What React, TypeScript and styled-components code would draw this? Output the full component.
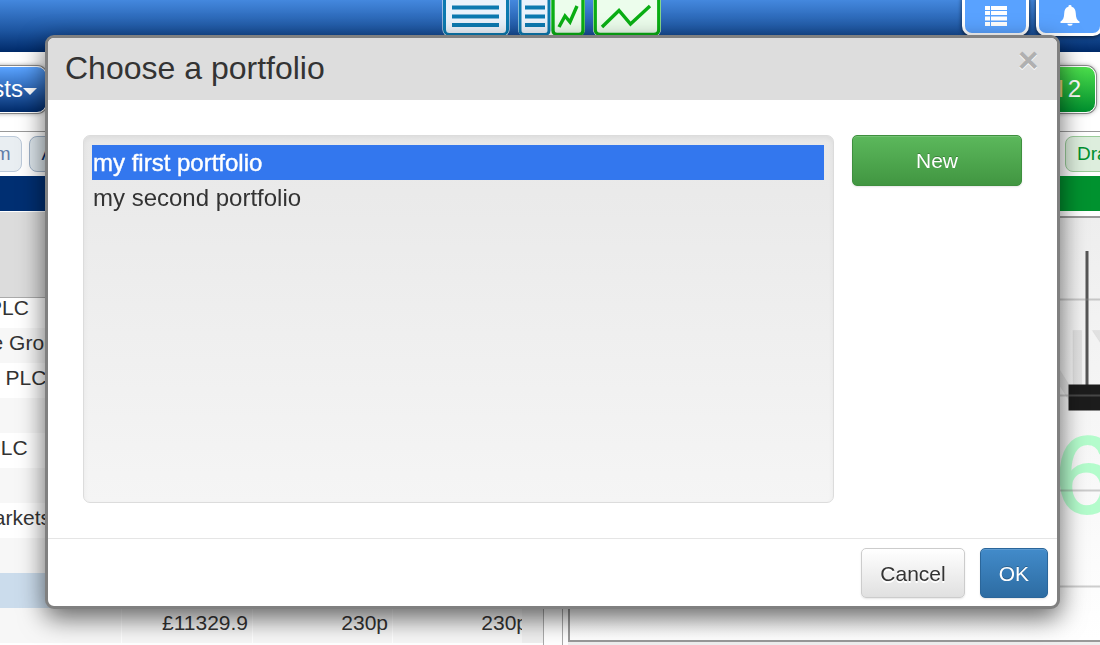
import React from "react";
import styled, { createGlobalStyle, css } from "styled-components";

const GlobalStyle = createGlobalStyle`
  *, *::before, *::after { box-sizing: border-box; }
  html, body { margin: 0; overflow: hidden; }
  body {
    background: #fff;
    color: #333;
    font: 21px/35px "Liberation Sans", Arial, sans-serif;
  }
  button, select { font-family: inherit; margin: 0; }
`;

/* ---------- workspace behind the dialog ---------- */

const Shell = styled.div`
  width: calc(100% + 3px);
  height: 100vh;
  display: flex;
  flex-direction: column;
  overflow: hidden;
`;

const TopBar = styled.header`
  flex: none;
  height: 52px;
  display: grid;
  grid-template-columns: 1fr auto 1fr;
  align-items: start;
  background: linear-gradient(#4488de, #1c549f 60%, #002a69);
`;

const LayoutSwitch = styled.div`
  grid-column: 2;
  display: flex;
  gap: 8px;
`;

const TopActions = styled.div`
  display: flex;
  justify-content: flex-end;
  gap: 7px;
`;

const LayoutButton = styled.button`
  display: block;
  padding: 0;
  border: 0;
  background: none;
  line-height: 0;
`;

const TopButton = styled.button`
  width: 67px;
  height: 46px;
  margin-top: -10px;
  padding: 5px 0 0;
  display: flex;
  align-items: center;
  justify-content: center;
  color: #fff;
  background: #59a2ff;
  border: 3px solid #fff;
  border-radius: 10px;
  box-shadow: 0 1px 4px rgba(0, 0, 0, 0.7);
`;

const Toolbar = styled.nav`
  flex: none;
  height: 80px;
  display: flex;
  justify-content: space-between;
  align-items: flex-start;
  padding: 14px 7px 0 0;
  border-bottom: 1px solid #999;
`;

const MenuButton = styled.button<{ $tone: "blue" | "green" }>`
  height: 47px;
  width: 168px;
  display: flex;
  align-items: center;
  justify-content: flex-end;
  color: #fff;
  font-size: 24px;
  border: 1px solid #fff;
  border-radius: 10px;
  box-shadow: 0 0 0 1px #888, 0 0 5px rgba(0, 0, 0, 0.5);
  ${(p) =>
    p.$tone === "blue"
      ? css`
          margin-left: -121px;
          padding: 0 9px 2px 0;
          background: linear-gradient(#5aa3ff, #002a69);
        `
      : css`
          gap: 4px;
          padding: 0 14px 2px 0;
          background: linear-gradient(#4cde4c, #008f2e);
        `}
`;

const Caret = styled.span`
  border: 7px solid transparent;
  border-top-color: #fff;
  border-bottom: 0;
  margin-top: 6px;
`;

const LevelWord = styled.span`
  color: #f3d58a;
`;

const Panels = styled.main`
  flex: 1;
  min-height: 0;
  display: flex;
  gap: 18px;
`;

const ListPanel = styled.section`
  width: 544px;
  border-right: 1px solid #aaa;
  overflow: hidden;
`;

const ChartPanel = styled.section`
  flex: 1;
  border-left: 1px solid #aaa;
  overflow: hidden;
  display: flex;
  flex-direction: column;
`;

const Tabs = styled.div<{ $end?: boolean }>`
  flex: none;
  height: 44px;
  display: flex;
  gap: 7px;
  padding-top: 4px;
  justify-content: ${(p) => (p.$end ? "flex-end" : "flex-start")};
  margin: ${(p) => (p.$end ? "0 -36px 0 0" : "0 0 0 -67px")};
`;

const Tab = styled.button<{ $tone: "blue" | "green" | "slate" }>`
  height: 36px;
  min-width: 74px;
  padding: 0 11px;
  font-size: 19px;
  border-radius: 8px;
  border: 1px solid;
  text-align: left;
  ${(p) =>
    p.$tone === "green"
      ? css`
          color: #008f2e;
          background: #ddeedd;
          border-color: #99cc99;
        `
      : p.$tone === "blue"
      ? css`
          color: #5f7da8;
          background: #e9eef2;
          border-color: #bccada;
        `
      : css`
          color: #002a69;
          background: #dde6ec;
          border-color: #9fb2c8;
        `}
`;

const TitleStrip = styled.div<{ $color: string }>`
  flex: none;
  height: 35px;
  background: ${(p) => p.$color};
`;

const TableScroll = styled.div`
  width: 522px;
  overflow: hidden;
`;

const ListBody = styled.div`
  background: #efefef;
`;

const ListHead = styled.div`
  height: 87px;
  border-top: 1px solid #fff;
  border-bottom: 1px solid #aaa;
  background: #dcdcdc;
`;

const Holdings = styled.table`
  width: 629px;
  margin: -5px 0 0 -96px;
  table-layout: fixed;
  border-collapse: collapse;
`;

const HoldingRow = styled.tr<{ $selected?: boolean }>`
  height: 35px;
  background: #fff;
  &:nth-child(even) {
    background: #f7f7f7;
  }
  ${(p) => p.$selected && "&&& { background: #cbdcec; }"}
`;

const Cell = styled.td`
  height: 35px;
  padding: 0 4px 5px 0;
  line-height: 30px;
  text-align: right;
  border-right: 1px solid #fff;
`;

const NameCell = styled.th`
  padding: 0 0 5px;
  line-height: 30px;
  font-weight: normal;
  text-align: left;
  white-space: nowrap;
  border-right: 1px solid #fff;
`;

const ChartFrame = styled.div`
  flex: 1;
  margin: 5px 0 0 5px;
  background: #eee;
`;

const ChartSvg = styled.svg`
  display: block;
  width: 100%;
  height: 426px;
  border: 2px solid #999;
  border-right: 0;
`;

/* ---------- dialog ---------- */

const Overlay = styled.div`
  position: fixed;
  inset: 0;
  padding: 35px 40px 36px 45px;
`;

const Dialog = styled.div`
  background: #fff;
  border: 3px solid #808080;
  border-radius: 9px;
  box-shadow: 0 9px 26px rgba(0, 0, 0, 0.6);
`;

const DialogHeader = styled.div`
  display: flex;
  justify-content: space-between;
  align-items: flex-start;
  padding: 10px 19px 12px 17px;
  background: #ddd;
  border-radius: 6px 6px 0 0;
`;

const DialogTitle = styled.h3`
  margin: 0;
  font-size: 32px;
  line-height: 40px;
  font-weight: normal;
`;

const CloseButton = styled.button`
  width: 20px;
  padding: 0;
  border: 0;
  background: none;
  color: #b0b0b0;
  font-size: 35px;
  font-weight: bold;
  line-height: 24px;
  text-shadow: 0 1px 0 #fff;
`;

const DialogBody = styled.div`
  display: flex;
  align-items: flex-start;
  gap: 18px;
  padding: 35px;
`;

const Well = styled.div`
  flex: 1;
  min-height: 368px;
  padding: 9px 9px 9px 8px;
  border: 1px solid #dcdcdc;
  border-radius: 7px;
  background: linear-gradient(#e8e8e8, #f5f5f5);
  box-shadow: inset 0 2px 5px rgba(0, 0, 0, 0.05), 0 1px 0 rgba(255, 255, 255, 0.1);
`;

const PortfolioList = styled.select`
  display: block;
  width: 100%;
  height: 348px;
  padding: 0;
  border: 0;
  border-radius: 0;
  outline: 0;
  overflow: hidden;
  background: transparent;
  font-size: 24px;

  option {
    height: 35px;
    min-height: 35px;
    padding: 4px 1px 0;
    color: #333;
  }
  option:checked {
    background-image: linear-gradient(#3377ee, #3377ee);
    -webkit-text-fill-color: #fff;
    -webkit-text-stroke: 0.4px #fff;
  }
`;

const DialogFooter = styled.div`
  display: flex;
  justify-content: flex-end;
  gap: 15px;
  padding: 9px 9px 8px;
  border-top: 1px solid #e5e5e5;
`;

const tones = {
  green: css`
    color: #fff;
    background: linear-gradient(#5cb85c, #419641);
    border-color: #3e8f3e;
    text-shadow: 0 -1px 0 rgba(0, 0, 0, 0.25);
  `,
  blue: css`
    color: #fff;
    background: linear-gradient(#428bca, #2d6ca2);
    border-color: #2b669a;
    text-shadow: 0 -1px 0 rgba(0, 0, 0, 0.25);
  `,
  plain: css`
    color: #333;
    background: linear-gradient(#fff, #e0e0e0);
    border-color: #ccc;
    text-shadow: 0 2px 0 #fff;
  `,
};

const Button = styled.button<{ $tone: keyof typeof tones; $width?: number }>`
  height: ${(p) => (p.$width ? 51 : 50)}px;
  ${(p) => p.$width && `width: ${p.$width}px;`}
  padding: 1px 18px 0;
  font-size: 21px;
  border: 1px solid;
  border-radius: 5px;
  ${(p) => tones[p.$tone]}
  box-shadow: inset 0 1px 0 rgba(255, 255, 255, 0.15), 0 1px 2px rgba(0, 0, 0, 0.1);
`;

/* ---------- drawings ---------- */

const BLUE = "#0c79b0";
const GREEN = "#0aae14";

const RowsIcon = () => (
  <svg width="68" height="37" viewBox="0 0 68 37">
    <rect x="0.5" y="-9.5" width="67" height="46" rx="7" fill="#fff" />
    <rect x="2.5" y="-8.5" width="63" height="43" rx="5" fill="#eaf2fb" stroke={BLUE} strokeWidth="3" />
    <path d="M10 7.5h47M10 16.5h47M10 25h47" stroke={BLUE} strokeWidth="3.8" />
  </svg>
);

const SplitIcon = () => (
  <svg width="67" height="37" viewBox="0 0 67 37">
    <rect x="0" y="-9.5" width="67" height="46" rx="7" fill="#fff" />
    <rect x="2" y="-8.5" width="29" height="43" rx="4" fill="#eaf2fb" stroke={BLUE} strokeWidth="3" />
    <path d="M7 7.5h20M7 16.5h20M7 25h20" stroke={BLUE} strokeWidth="3.8" />
    <rect x="35" y="-8.5" width="30" height="43" rx="4" fill="#ecfdec" stroke={GREEN} strokeWidth="3.4" />
    <path d="M41 27L47 16L52 22L59 6" fill="none" stroke={GREEN} strokeWidth="3.4" />
  </svg>
);

const TrendIcon = () => (
  <svg width="68" height="37" viewBox="0 0 68 37">
    <rect x="0" y="-9.5" width="68" height="46" rx="7" fill="#fff" />
    <rect x="2.2" y="-8.5" width="63.6" height="43" rx="5" fill="#ecfdec" stroke={GREEN} strokeWidth="3.4" />
    <path d="M9 27L26 10.5L37.5 24L57 6" fill="none" stroke={GREEN} strokeWidth="3.4" />
  </svg>
);

const ListIcon = () => (
  <svg width="22" height="20" viewBox="0 0 22 20" fill="currentColor">
    <path d="M0 0h5v4H0zM6 0h16v4H6zM0 5h5v4H0zM6 5h16v4H6zM0 10.5h5v4H0zM6 10.5h16v4H6zM0 16h5v4H0zM6 16h16v4H6z" />
  </svg>
);

const BellIcon = () => (
  <svg width="20" height="21" viewBox="0 0 20 21" fill="currentColor">
    <path d="M10 0a1.5 1.5 0 0 1 1.5 1.8C14.500 2.500 15.600 5 15.800 8.500C16 13 17 15 19.500 16.500V18H.5V16.500C3 15 4 13 4.200 8.500C4.400 5 5.500 2.500 8.500 1.800A1.500 1.500 0 0 1 10 0zM7.300 18.800h5.400a2.700 2 0 0 1-5.400 0z" />
  </svg>
);

const Chart = () => (
  <ChartSvg viewBox="0 0 534 422" preserveAspectRatio="xMaxYMin slice" aria-hidden="true">
    <defs>
      <linearGradient id="plot" x1="0" y1="0" x2="0" y2="1">
        <stop offset="0" stopColor="#eeeeee" />
        <stop offset="1" stopColor="#ffffff" />
      </linearGradient>
    </defs>
    <rect width="534" height="422" fill="url(#plot)" />
    <text x="446" y="184" fontSize="104" fill="#000" fillOpacity="0.07" stroke="#000" strokeOpacity="0.03">NY</text>
    <text x="486" y="295" fontSize="110" fill="#b4fccc" stroke="#b4fccc" strokeWidth="2">6</text>
    <path d="M518 33V168" stroke="#555" strokeWidth="3" />
    <rect x="499.500" y="166.500" width="60" height="26" fill="#1c1c1c" />
    <path d="M0 81.500H534M0 177.500H534M0 272.500H534M0 368.500H534" stroke="#888" strokeOpacity="0.4" strokeWidth="2" />
  </ChartSvg>
);

const holdings = [
  { name: "Centrica PLC" },
  { name: "Greencore Group" },
  { name: "Schroders PLC" },
  { name: "" },
  { name: "Unilever PLC" },
  { name: "" },
  { name: "Energy Markets" },
  { name: "" },
  { name: "", selected: true },
  { name: "", value: "£11329.9", bid: "230p", offer: "230p" },
];

export default function App() {
  return (
    <>
      <GlobalStyle />
      <Shell>
        <TopBar>
          <LayoutSwitch>
            <LayoutButton aria-label="List layout"><RowsIcon /></LayoutButton>
            <LayoutButton aria-label="Split layout"><SplitIcon /></LayoutButton>
            <LayoutButton aria-label="Chart layout"><TrendIcon /></LayoutButton>
          </LayoutSwitch>
          <TopActions>
            <TopButton aria-label="Menu"><ListIcon /></TopButton>
            <TopButton aria-label="Alerts"><BellIcon /></TopButton>
          </TopActions>
        </TopBar>
        <Toolbar>
          <MenuButton $tone="blue">Watchlists<Caret /></MenuButton>
          <MenuButton $tone="green"><LevelWord>Level</LevelWord> 2</MenuButton>
        </Toolbar>
        <Panels>
          <ListPanel>
            <Tabs>
              <Tab $tone="blue">Custom</Tab>
              <Tab $tone="slate">Add</Tab>
            </Tabs>
            <TitleStrip $color="#002f72" />
            <ListHead />
            <ListBody>
              <TableScroll>
                <Holdings>
                  <colgroup>
                    <col />
                    <col width="131" />
                    <col width="140" />
                    <col width="140" />
                  </colgroup>
                  <tbody>
                    {holdings.map((h, i) => (
                      <HoldingRow key={i} $selected={h.selected}>
                        <NameCell scope="row">{h.name}</NameCell>
                        <Cell>{h.value}</Cell>
                        <Cell>{h.bid}</Cell>
                        <Cell>{h.offer}</Cell>
                      </HoldingRow>
                    ))}
                  </tbody>
                </Holdings>
              </TableScroll>
            </ListBody>
          </ListPanel>
          <ChartPanel>
            <Tabs $end>
              <Tab $tone="green">Draw</Tab>
            </Tabs>
            <TitleStrip $color="#00922f" />
            <ChartFrame>
              <Chart />
            </ChartFrame>
          </ChartPanel>
        </Panels>
      </Shell>

      <Overlay>
        <Dialog role="dialog" aria-modal="true" aria-labelledby="dialog-title">
          <DialogHeader>
            <DialogTitle id="dialog-title">Choose a portfolio</DialogTitle>
            <CloseButton aria-label="Close">×</CloseButton>
          </DialogHeader>
          <DialogBody>
            <Well>
              <PortfolioList size={2} defaultValue="first" aria-labelledby="dialog-title">
                <option value="first">my first portfolio</option>
                <option value="second">my second portfolio</option>
              </PortfolioList>
            </Well>
            <Button $tone="green" $width={170}>New</Button>
          </DialogBody>
          <DialogFooter>
            <Button $tone="plain">Cancel</Button>
            <Button $tone="blue">OK</Button>
          </DialogFooter>
        </Dialog>
      </Overlay>
    </>
  );
}
